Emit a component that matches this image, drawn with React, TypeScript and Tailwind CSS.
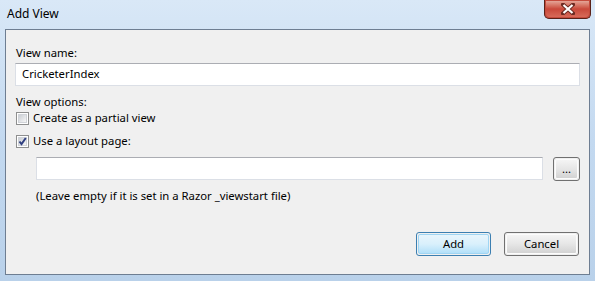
import React from "react";

const font = { fontFamily: '"Segoe UI", "Noto Sans", "Liberation Sans", sans-serif' };

const TextBox = ({ value, className }: { value?: string; className?: string }) => (
  <div
    className={
      "h-[23px] bg-white border border-[#dbdfe6] border-t-[#abadb3] flex items-center px-[6px] text-[11.3px] text-black " +
      (className ?? "")
    }
  >
    {value}
  </div>
);

const CheckBox = ({ checked }: { checked?: boolean }) => (
  <div className="w-[13px] h-[13px] border border-[#8e8f8f] bg-white p-[1px] shrink-0">
    <div className="w-full h-full bg-gradient-to-br from-[#cbcfd5] to-[#f6f6f6] border border-[#d0d3d8] relative">
      {checked && (
        <svg viewBox="0 0 9 9" className="absolute -left-[1px] -top-[1px] w-[9px] h-[9px]">
          <path d="M1.5 4.5 L3.5 7 L7.8 1" fill="none" stroke="#2f3f80" strokeWidth="2" />
        </svg>
      )}
    </div>
  </div>
);

const Button = ({ label, primary, className }: { label: string; primary?: boolean; className?: string }) => (
  <div
    className={
      "h-[24px] rounded-[3px] border flex items-center justify-center text-[11.3px] text-black p-[1px] " +
      (primary ? "border-[#3c7fb1] " : "border-[#707070] ") +
      (className ?? "")
    }
  >
    <div
      className={
        "w-full h-full rounded-[2px] flex items-center justify-center " +
        (primary
          ? "bg-gradient-to-b from-[#e8f5fc] via-[#d9f0fc] to-[#b3e0f9] border border-[#9fd5f3]"
          : "bg-gradient-to-b from-[#f4f4f4] via-[#e6e6e6] to-[#d3d3d3] border border-[#fcfcfc]")
      }
    >
      {label}
    </div>
  </div>
);

export default function App() {
  return (
    <div
      style={font}
      className="w-[595px] h-[281px] bg-gradient-to-b from-[#d9e8f7] via-[#c3d9f0] to-[#b9d1ea] flex flex-col overflow-hidden relative"
    >
      {/* title bar */}
      <div className="h-[29px] flex items-start justify-between shrink-0">
        <div className="pl-[7px] pt-[5px] text-[12px] text-black">Add View</div>
        <div className="mr-[4px] w-[47px] h-[19px] rounded-b-[5px] border border-t-0 border-[#5a2219] p-[1px] bg-[#c44b3d]">
          <div className="w-full h-full rounded-b-[4px] bg-gradient-to-b from-[#e3a497] via-[#c9483a] to-[#d76a59] flex items-center justify-center">
            <svg viewBox="0 0 14 12" className="w-[14px] h-[12px]">
              <path d="M2 1.5 L12 10.5 M12 1.5 L2 10.5" stroke="#6b2a22" strokeWidth="4" strokeLinecap="square" />
              <path d="M2.5 2 L11.5 10 M11.5 2 L2.5 10" stroke="#ffffff" strokeWidth="2.2" />
            </svg>
          </div>
        </div>
      </div>

      {/* client area */}
      <div className="mx-[5px] mb-[6px] flex-1 border border-[#6e7e92] bg-[#f0f0f0] flex flex-col px-[9px] pt-[15px] pb-[18px] text-[11.3px] text-black">
        <div className="h-[16px] leading-[16px] pl-[1px]">View name:</div>
        <TextBox value="CricketerIndex" className="mt-[2px]" />
        <div className="h-[16px] leading-[16px] mt-[8px] pl-[1px]">View options:</div>
        <div className="h-[16px] flex items-center gap-[4px] pl-[1px] pt-[1px]">
          <CheckBox />
          <span>Create as a partial view</span>
        </div>
        <div className="h-[16px] flex items-center gap-[4px] pl-[1px] mt-[7px]">
          <CheckBox checked />
          <span>Use a layout page:</span>
        </div>
        <div className="flex mt-[8px] ml-[21px] gap-[10px]">
          <TextBox className="flex-1" />
          <Button label="..." className="w-[27px] h-[23px] text-[9px]" />
        </div>
        <div className="ml-[21px] mt-[7px] h-[16px] leading-[16px]">
          (Leave empty if it is set in a Razor _viewstart file)
        </div>
        <div className="mt-auto flex justify-end gap-[13px] pr-[1px]">
          <Button label="Add" primary className="w-[75px]" />
          <Button label="Cancel" className="w-[75px]" />
        </div>
      </div>
    </div>
  );
}
